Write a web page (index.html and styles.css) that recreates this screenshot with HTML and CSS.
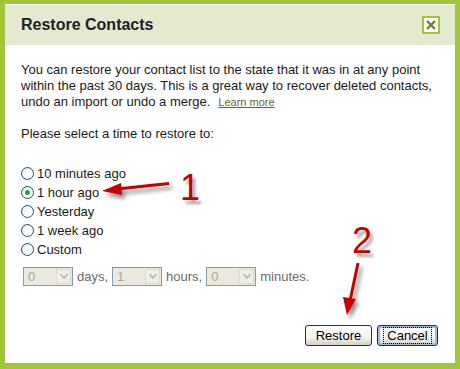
FILE: index.html
```html
<!DOCTYPE html>
<html>
<head>
    <title>Restore Contacts</title>
    <link rel="stylesheet" href="styles.css">
</head>
<body>
    <div class="dialog">
        <div class="dialog-header">
            <h1>Restore Contacts</h1>
            <span class="close-btn">
                <svg width="14" height="14" viewBox="0 0 14 14">
                    <path d="M3 3 L11 11 M11 3 L3 11" stroke="#6d7c3a" stroke-width="2.4" fill="none"/>
                </svg>
            </span>
        </div>
        <div class="dialog-body">
            <p class="intro">You can restore your contact list to the state that it was in at any point within the past 30 days. This is a great way to recover deleted contacts, undo an import or undo a merge.<a href="#" class="learn-more">Learn more</a></p>
            <p class="prompt">Please select a time to restore to:</p>
            <div class="options">
                <label class="option"><span class="radio"></span>10 minutes ago</label>
                <label class="option"><span class="radio checked"></span>1 hour ago</label>
                <label class="option"><span class="radio"></span>Yesterday</label>
                <label class="option"><span class="radio"></span>1 week ago</label>
                <label class="option"><span class="radio"></span>Custom</label>
            </div>
            <div class="custom-row">
                <div class="select"><span class="select-value">0</span><span class="select-btn"></span></div>
                <span>days,</span>
                <div class="select"><span class="select-value">1</span><span class="select-btn"></span></div>
                <span>hours,</span>
                <div class="select"><span class="select-value">0</span><span class="select-btn"></span></div>
                <span>minutes.</span>
            </div>
            <div class="actions">
                <button class="btn btn-restore">Restore</button>
                <button class="btn btn-focus"><span>Cancel</span></button>
            </div>
        </div>

        <!-- annotations drawn over the dialog -->
        <svg class="arrows" width="460" height="369" viewBox="0 0 460 369">
            <defs>
                <filter id="shadow" x="-30%" y="-30%" width="160%" height="160%">
                    <feGaussianBlur in="SourceAlpha" stdDeviation="2"/>
                    <feOffset dx="3" dy="4"/>
                    <feComponentTransfer><feFuncA type="linear" slope="0.45"/></feComponentTransfer>
                    <feMerge><feMergeNode/><feMergeNode in="SourceGraphic"/></feMerge>
                </filter>
            </defs>
            <g filter="url(#shadow)">
                <path d="M169 184.5 L117 190" stroke="#c40000" stroke-width="3" fill="none"/>
                <path d="M102 192 L121 184 L122 196 Z" fill="#c40000"/>
                <path d="M358 264 L350 302" stroke="#c40000" stroke-width="3" fill="none"/>
                <path d="M347 316 L343 298 L356 300 Z" fill="#c40000"/>
            </g>
        </svg>
        <span class="marker marker-1">1</span>
        <span class="marker marker-2">2</span>
    </div>
</body>
</html>
```

FILE: styles.css
```css
body {
    margin: 0;
    padding: 0;
    font-family: "Liberation Sans", Arial, sans-serif;
    font-size: 13px;
    color: #1a1a1a;
    background-color: #fff;
}
.dialog {
    position: relative;
    width: 460px;
    height: 369px;
    box-sizing: border-box;
    border: 5px solid #a2c63a;
    border-bottom-width: 6px;
    border-top: 4px solid #a2c63a;
    background-color: #fff;
    overflow: hidden;
}
.dialog::before {
    content: "";
    position: absolute;
    left: -5px;
    right: -5px;
    top: -4px;
    height: 1px;
    background-color: #3f4a1c;
}
.dialog-header {
    height: 40px;
    margin-top: 1px;
    background-color: #e4ead0;
    display: flex;
    align-items: center;
    justify-content: space-between;
    padding: 0 15px 0 16px;
}
.dialog-header h1 {
    margin: 0;
    font-size: 16px;
    font-weight: bold;
    color: #222;
}
.close-btn {
    width: 14px;
    height: 14px;
    border: 2px solid #a2c63a;
    background-color: #fff;
    display: flex;
    align-items: center;
    justify-content: center;
}
.dialog-body {
    padding: 17px 16px 0 16px;
}
.intro {
    margin: 0;
    line-height: 16px;
}
.learn-more {
    display: inline-block;
    font-size: 11px;
    line-height: 12px;
    color: #5b6b1e;
    margin-left: 8px;
}
.prompt {
    margin: 16px 0 0 0;
    line-height: 16px;
}
.options {
    margin-top: 22px;
    display: flex;
    flex-direction: column;
}
.option {
    display: flex;
    align-items: center;
    height: 19px;
}
.radio {
    width: 11px;
    height: 11px;
    border: 1px solid #1c5180;
    border-radius: 50%;
    background: radial-gradient(circle at 65% 65%, #fff 30%, #dcdcd5 100%);
    margin-right: 3px;
    position: relative;
}
.radio.checked::after {
    content: "";
    position: absolute;
    left: 3px;
    top: 3px;
    width: 5px;
    height: 5px;
    border-radius: 50%;
    background-color: #2aa12a;
}
.custom-row {
    display: flex;
    align-items: center;
    gap: 4px;
    margin-top: 8px;
    padding-left: 2px;
    color: #6a6a6a;
}
.select {
    width: 48px;
    height: 17px;
    border: 1px solid #7f9db9;
    background-color: #ebe9de;
    display: flex;
    align-items: center;
    justify-content: space-between;
}
.select-value {
    color: #aca899;
    padding-left: 4px;
}
.select-btn {
    width: 15px;
    height: 15px;
    margin-right: 1px;
    background-color: #f0efe6;
    border: 1px solid #dcdad0;
    box-sizing: border-box;
    position: relative;
}
.select-btn::after {
    content: "";
    position: absolute;
    left: 4px;
    top: 2px;
    width: 4px;
    height: 4px;
    border-right: 2px solid #c3c1b5;
    border-bottom: 2px solid #c3c1b5;
    transform: rotate(45deg);
}
.actions {
    display: flex;
    justify-content: flex-end;
    gap: 5px;
    margin-top: 39px;
    padding-right: 1px;
}
.btn {
    font-family: "Liberation Sans", Arial, sans-serif;
    font-size: 13px;
    color: #000;
    height: 21px;
    padding: 0 8px;
    border: 1px solid #003c74;
    border-radius: 3px;
    background: linear-gradient(#fff, #f4f3ee 60%, #d6d0c5);
}
.btn-restore {
    width: 67px;
}
.btn-focus {
    width: 61px;
    box-shadow: inset 0 0 0 2px #9cb8e8;
    padding: 0 3px;
}
.btn-focus span {
    border: 1px dotted #000;
    padding: 0 3px;
}
.arrows {
    position: absolute;
    left: -5px;
    top: -5px;
    pointer-events: none;
}
.marker {
    position: absolute;
    font-size: 36px;
    line-height: 1;
    color: #c40000;
    text-shadow: 3px 4px 3px rgba(0, 0, 0, 0.35);
}
.marker-1 {
    left: 175px;
    top: 166px;
}
.marker-2 {
    left: 347px;
    top: 219px;
}
```
